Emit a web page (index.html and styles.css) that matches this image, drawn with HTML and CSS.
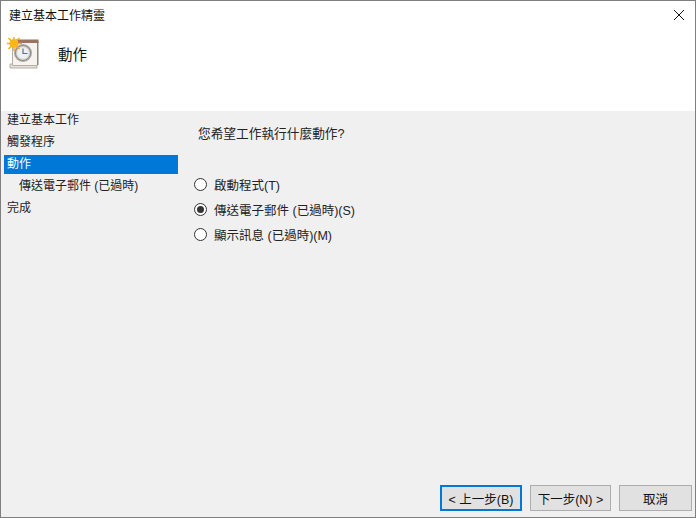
FILE: index.html
```html
<!DOCTYPE html>
<html lang="zh-Hant">
<head>
<meta charset="utf-8">
<title>建立基本工作精靈</title>
<link rel="stylesheet" href="styles.css">
</head>
<body>
<div class="window">
  <header class="head">
    <div class="titlebar">
      <span class="title">建立基本工作精靈</span>
      <svg class="close" width="10" height="10" viewBox="0 0 10 10"><path d="M0 0L10 10M10 0L0 10" stroke="#111" stroke-width="1" fill="none"/></svg>
    </div>
    <div class="banner">
      <svg class="task-icon" width="34" height="34" viewBox="0 0 34 34">
        <path d="M3 27H30V31H3Z" fill="#e4e0da" stroke="#b4aea6"/>
        <path d="M5.500 4.500H30.500V28.500H5.500Z" fill="#f7f4ef" stroke="#b5aea5"/>
        <rect x="30" y="4" width="1.500" height="24" fill="#8d8780"/>
        <rect x="9" y="2.500" width="22.500" height="3.500" fill="#9c7360"/>
        <circle cx="16" cy="16" r="9" fill="#a9a9a6"/>
        <circle cx="16" cy="16" r="7.500" fill="#d8d5cd" stroke="#8b8d8b" stroke-width="1"/>
        <circle cx="16" cy="16" r="5.800" fill="#eef1f4"/>
        <path d="M16 11.500V16.500H20.500" fill="none" stroke="#5c6f88" stroke-width="1.200"/>
        <g stroke="#f6a90f" stroke-width="1.400"><path d="M7 -1V14M-1 6.500H15M1.500 1L12.500 12M12.500 1L1.500 12"/></g>
        <circle cx="7" cy="6.500" r="4.500" fill="#fab61d"/>
      </svg>
      <span class="banner-title">動作</span>
    </div>
  </header>
  <main class="body">
    <nav class="steps">
      <div class="step">建立基本工作</div>
      <div class="step">觸發程序</div>
      <div class="step active">動作</div>
      <div class="step sub">傳送電子郵件 (已過時)</div>
      <div class="step">完成</div>
    </nav>
    <section class="panel">
      <p class="question">您希望工作執行什麼動作?</p>
      <div class="options">
        <div class="option"><span class="radio"></span>啟動程式(T)</div>
        <div class="option"><span class="radio checked"></span>傳送電子郵件 (已過時)(S)</div>
        <div class="option"><span class="radio"></span>顯示訊息 (已過時)(M)</div>
      </div>
    </section>
  </main>
  <footer class="actions">
    <button class="btn default">&lt; 上一步(B)</button>
    <button class="btn">下一步(N) &gt;</button>
    <button class="btn cancel">取消</button>
  </footer>
</div>
</body>
</html>
```
FILE: styles.css
```css
* { box-sizing: border-box; }
html, body { margin: 0; height: 100%; }
body {
  font-family: "Liberation Sans", "Noto Sans CJK TC", sans-serif;
  font-size: 12px;
  color: #111;
}
.window {
  width: 696px;
  height: 518px;
  border: 1px solid #7f7f7f;
  background: #f0f0f0;
  display: flex;
  flex-direction: column;
}
.head { background: #fff; height: 110px; flex: none; }
.titlebar {
  height: 30px;
  display: flex;
  align-items: center;
  justify-content: space-between;
  padding: 0 11px 3px 8px;
}
.close { display: block; }
.banner { display: flex; align-items: flex-start; padding: 6px 0 0 6px; }
.task-icon { flex: none; display: block; }
.banner-title { font-size: 14.500px; line-height: 20px; margin: 8px 0 0 17px; }
.body { flex: 1; display: flex; min-height: 0; }
.steps { width: 177px; flex: none; padding: 0 0 0 3px; margin-top: -2px; }
.step { height: 22px; line-height: 18px; padding: 0 0 0 3px; color: #222; display: flex; align-items: center; }
.step.active { background: #0078d7; color: #fff; height: 19px; margin: 2px 0 0; padding-bottom: 1px; }
.step.sub { height: 23px; padding-left: 15px; }
.panel { flex: 1; padding: 14px 0 0 20px; }
.question { margin: 0; line-height: 18px; color: #222; font-size: 12.700px; }
.options { margin-top: 32px; display: flex; flex-direction: column; gap: 7px; font-size: 12.500px; }
.option { height: 18px; display: flex; align-items: center; gap: 7px; margin-left: -4px; color: #222; }
.radio {
  width: 13px;
  height: 13px;
  border: 1px solid #333;
  border-radius: 50%;
  background: #fff;
  flex: none;
  display: flex;
  align-items: center;
  justify-content: center;
}
.radio.checked::after {
  content: "";
  width: 7px;
  height: 7px;
  border-radius: 50%;
  background: #333;
}
.actions {
  height: 32px;
  flex: none;
  display: flex;
  justify-content: flex-end;
  gap: 8px;
  padding: 0 3px 0 0;
}
.btn {
  width: 81px;
  height: 26px;
  border: 1px solid #adadad;
  background: #e1e1e1;
  font: inherit;
  font-size: 12.500px;
  color: #111;
  padding: 0;
}
.btn.default { width: 82px; border: 2px solid #0078d7; }
.btn.cancel { width: 73px; }
```
